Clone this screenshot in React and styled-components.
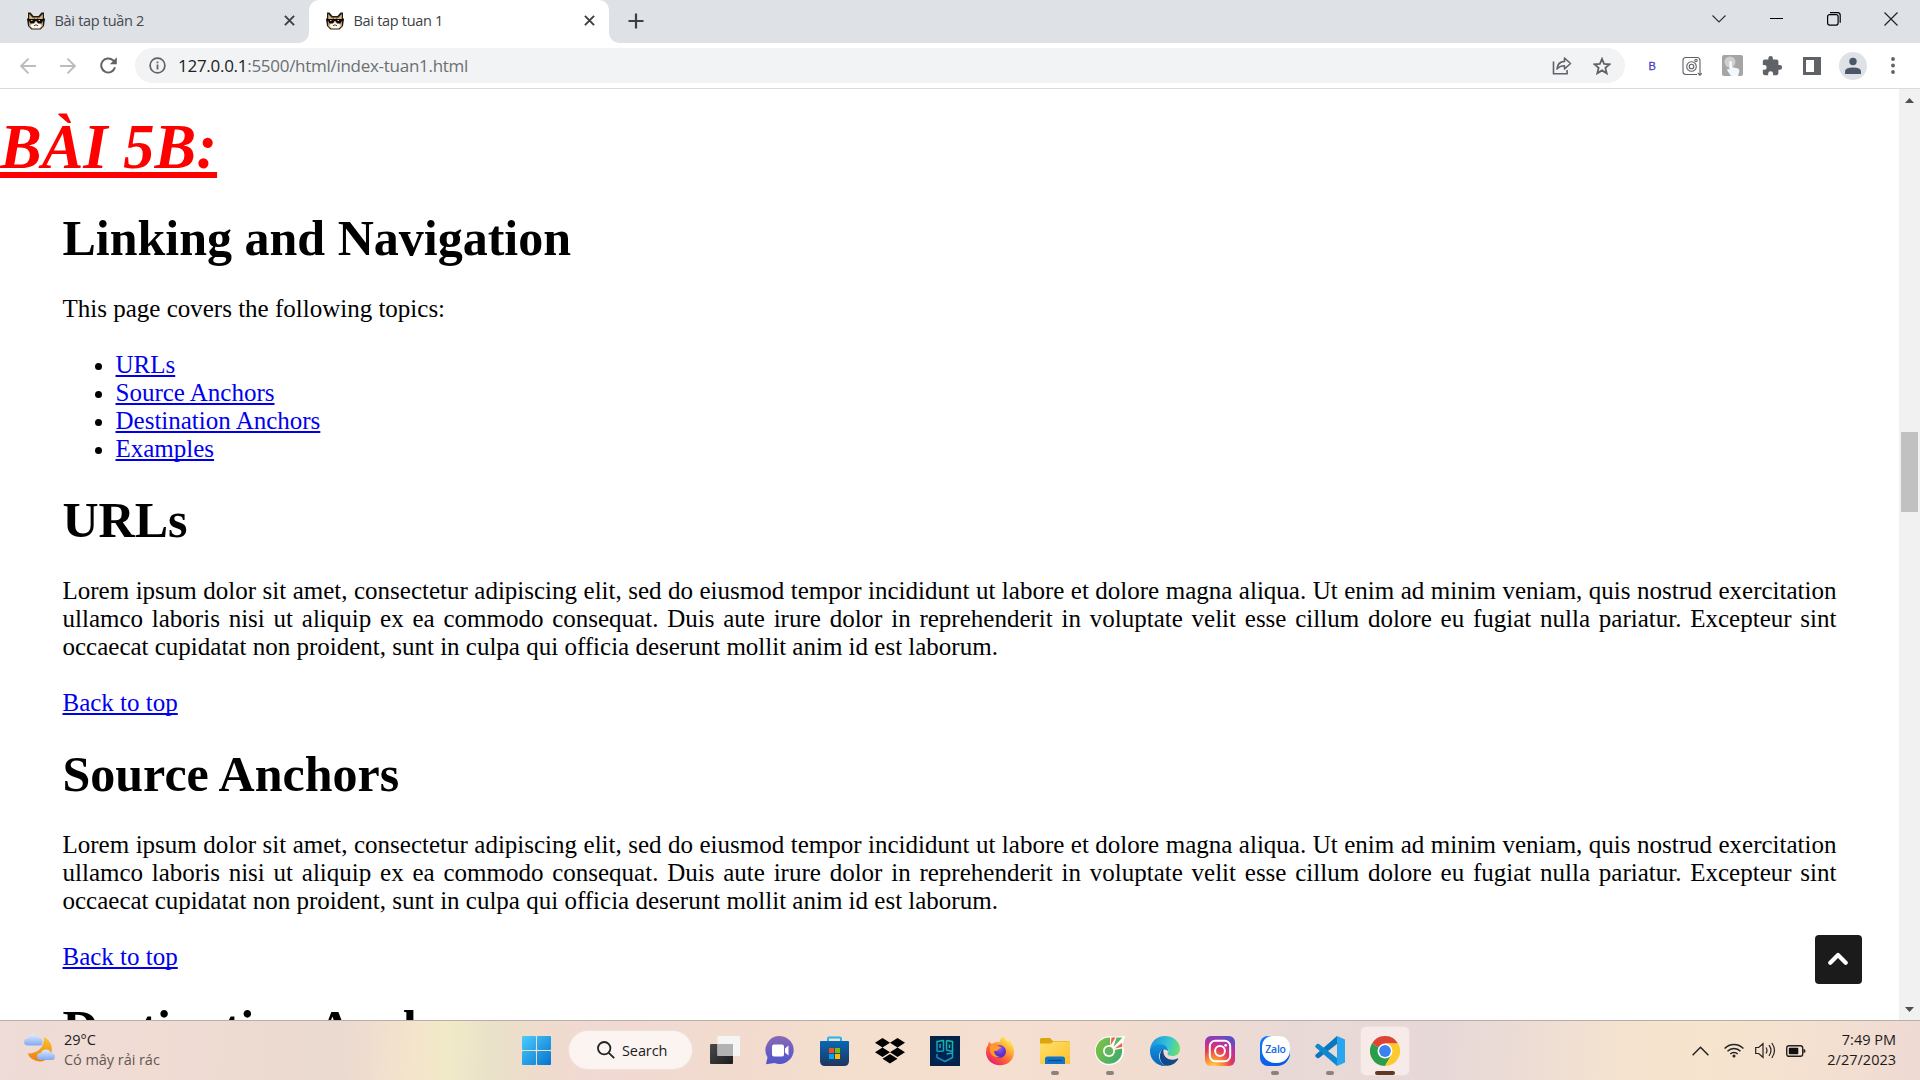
import React from "react";
import styled, { createGlobalStyle, css } from "styled-components";

const Global = createGlobalStyle`
  *{box-sizing:border-box}
  html,body{margin:0;padding:0;background:#fff;overflow:hidden}
`;
const ui = css`font-family:"Open Sans","Noto Sans",sans-serif;`;

const Screen = styled.div`
  width:1920px;height:1080px;display:flex;flex-direction:column;overflow:hidden;background:#fff;
`;
const TabStrip = styled.div`
  ${ui} height:43px;flex:none;display:flex;background:#dee1e6;
`;
const Tab = styled.div`
  width:${p => p.$w}px;height:43px;display:flex;align-items:center;padding:0 14px 2px ${p => p.$pl}px;
  color:${p => (p.$active ? "#3c4043" : "#45494d")};
  font-size:14.5px;
  ${p => p.$active && css`background:#fff;border-radius:10px 10px 0 0;position:relative;
    &::before,&::after{content:"";position:absolute;bottom:0;width:10px;height:10px;}
    &::before{left:-10px;background:radial-gradient(circle at 0 0,transparent 9.5px,#fff 10px);}
    &::after{right:-10px;background:radial-gradient(circle at 100% 0,transparent 9.5px,#fff 10px);}`}
`;
const TabTitle = styled.span`
  flex:1;margin-left:10px;white-space:nowrap;letter-spacing:${p => p.$ls}px;
`;
const NewTab = styled.div`
  width:30px;height:42px;margin-left:12px;display:flex;align-items:center;justify-content:center;
`;
const WindowButtons = styled.div`
  margin-left:auto;display:flex;height:38px;
`;
const WindowButton = styled.div`
  width:57.4px;display:flex;align-items:center;justify-content:center;
`;
const Toolbar = styled.div`
  ${ui} height:46px;flex:none;display:flex;align-items:center;background:#fff;border-bottom:1px solid #d9dbdd;
  padding-left:8px;
`;
const NavButton = styled.div`
  width:40px;height:40px;display:flex;align-items:center;justify-content:center;
`;
const Omnibox = styled.div`
  width:1490px;height:35px;border-radius:18px;background:#f1f3f4;display:flex;align-items:center;
  margin-left:7px;padding:0 3px 0 14px;
`;
const Url = styled.div`
  flex:1;margin-left:12px;font-size:17px;letter-spacing:-.28px;color:#6b6f73;white-space:nowrap;
  b{font-weight:400;color:#202124}
`;
const OmniIcon = styled.div`
  width:40px;display:flex;justify-content:center;
`;
const Extensions = styled.div`
  display:flex;align-items:center;margin-left:7px;
`;
const Ext = styled.div`
  width:40.1px;height:40px;display:flex;align-items:center;justify-content:center;
`;
const BMark = styled.span`
  font:400 11px "Liberation Sans",sans-serif;color:#4a3fc0;-webkit-text-stroke:.3px #4a3fc0;
`;
const Avatar = styled.div`
  width:28px;height:28px;border-radius:50%;background:#dee1e6;display:flex;align-items:center;justify-content:center;
`;
const Viewport = styled.div`
  height:931px;flex:none;display:flex;overflow:hidden;
`;
const Page = styled.main`
  position:relative;flex:1;min-width:0;height:931px;overflow:hidden;color:#000;
  font:25px/28px "Liberation Serif","Times New Roman",serif;
`;
const Exercise = styled.h1`
  margin:22px 0 0;font-size:62.5px;line-height:72px;font-style:italic;font-weight:700;color:#f00;
  text-decoration:underline;text-decoration-thickness:6px;text-underline-offset:4px;text-decoration-skip-ink:none;
`;
const Body = styled.div`
  padding:0 62.5px;
`;
const Heading = styled.h2`
  font-size:50px;line-height:56px;font-weight:700;margin:${p => p.$top}px 0 29px;
`;
const Para = styled.p`
  margin:0 0 28px;text-align:justify;
`;
const Topics = styled.ul`
  margin:0;padding-left:53px;
`;
const Link = styled.a`
  color:#0000ee;text-decoration:underline;text-decoration-thickness:2px;text-underline-offset:2px;text-decoration-skip-ink:none;
`;
const ToTop = styled.div`
  position:absolute;left:1815px;top:846px;width:47px;height:49px;border-radius:4px;background:#1b1b1b;
  display:flex;align-items:center;justify-content:center;padding:0 1px 2px 0;
`;
const ScrollBar = styled.div`
  width:21px;background:#f1f1f1;display:flex;flex-direction:column;align-items:center;
`;
const ScrollArrow = styled.div`
  height:21px;display:flex;align-items:center;justify-content:center;padding-top:${p => p.$shift || 0}px;
`;
const ScrollTrack = styled.div`
  flex:1;padding-top:322px;
`;
const ScrollThumb = styled.div`
  width:17px;height:80px;background:#c1c1c1;
`;
const Taskbar = styled.div`
  ${ui} height:60px;flex:none;border-top:1px solid #b9aea8;display:flex;align-items:stretch;color:#1b1b1b;
  background:linear-gradient(94deg,#efdbd7 0,#f1dcd4 8%,#ecdad1 14%,#ebdad0 18%,#f4e4cc 21.5%,#f1eac8 23.4%,#e9e2c9 25.5%,#efdccc 28%,#f1d9d4 31%,#f1dacf 36%,#f4decd 44%,#f4dfd0 52%,#f1dcd0 60%,#e9d9d6 67%,#e7d8d8 75%,#ecdcd5 79%,#f5e3cf 85%,#f7e4ce 89%,#f3dfd1 96%,#efd9d4 100%);
`;
const Weather = styled.div`
  width:514px;display:flex;padding:9px 0 0 24px;
`;
const WeatherText = styled.div`
  margin-left:8px;font-size:14.5px;letter-spacing:-.05px;
`;
const Line = styled.div`
  height:20px;line-height:20px;white-space:nowrap;color:${p => (p.$dim ? "#5f5854" : "#1b1b1b")};
`;
const Dock = styled.div`
  display:flex;
`;
const AppSlot = styled.div`
  width:${p => p.$w || 55}px;height:59px;display:flex;align-items:center;justify-content:center;position:relative;
`;
const AppTile = styled.div`
  width:48px;height:48px;border-radius:5px;display:flex;align-items:center;justify-content:center;
  ${p => p.$on && css`background:#f6ebe8;box-shadow:0 0 0 1px #eadfdb;`}
`;
const Indicator = styled.i`
  position:absolute;left:50%;bottom:5px;transform:translateX(-50%);height:4px;border-radius:2px;
  width:${p => (p.$on ? 20 : 8)}px;background:${p => (p.$on ? "#5f3825" : "#8b827e")};
`;
const Search = styled.div`
  width:123px;height:38px;margin:10px 5px 0 10px;border-radius:19px;background:#fbf4f1;box-shadow:0 0 0 1px #efe0da;
  display:flex;align-items:center;padding-left:28px;font-size:14.5px;gap:7px;letter-spacing:-.1px;
`;
const Tray = styled.div`
  margin-left:auto;display:flex;align-items:center;padding-right:24px;
`;
const TrayIcon = styled.div`
  width:${p => p.$w}px;display:flex;justify-content:center;
`;
const Clock = styled.div`
  width:84px;text-align:right;font-size:14.5px;padding-bottom:2px;
`;

const Cat = () => (
  <svg width="18" height="18" viewBox="0 0 18 18">
    <path d="M1 .5h2.500L6.500 4h5l3-3.500H17V6l1 1-1 7-3.500 3.500h-9L1 14 0 7l1-1z" fill="#241b14" />
    <path d="M2.200 2l3.300 3.500h7L15.800 2v12L13 16.500H5L2.200 14z" fill="#d9b27c" />
    <path d="M6 5.500h1.500L8 7.500zM12 5.500h-1.500L10 7.500z" fill="#5a3d25" />
    <path d="M5.500 10.500h7l2 3.500-2 2.200h-7L3.500 14z" fill="#fbf7ee" />
    <path d="M.5 7h17v1.500h-1.500l-1.500 3H11L9.500 9h-1L7 11.500H3.500L2 8.500H.5z" fill="#0a0a0a" />
    <path d="M4 8.500h1.500M11.500 8.500H13" stroke="#fff" strokeWidth=".8" />
    <path d="M7 14l1-1h2l1 1" stroke="#3a2c20" strokeWidth=".9" fill="none" />
  </svg>
);
const Close = () => (
  <svg width="11" height="11" viewBox="0 0 12 12" stroke="#3c4043" strokeWidth="2.100"><path d="M1 1l10 10M11 1L1 11" /></svg>
);
const Arrow = ({ flip }) => (
  <svg width="16" height="16" viewBox="0 0 16 16" fill="none" stroke="#babcbe" strokeWidth="1.900">
    <path d={flip ? "M0 8h14.500M7.500.7L14.800 8l-7.300 7.300" : "M16 8H1.500M8.500.7L1.200 8l7.300 7.300"} />
  </svg>
);
const Reload = () => (
  <svg width="17" height="17" viewBox="0 0 17 17"><path d="M15 10.300A7 7 0 1 1 13 3.300l1.500 1.500" fill="none" stroke="#5f6368" strokeWidth="2" /><path d="M16.800.300v7h-7z" fill="#5f6368" /></svg>
);
const Info = () => (
  <svg width="17" height="17" viewBox="0 0 17 17" fill="none" stroke="#5f6368"><circle cx="8.500" cy="8.500" r="7.400" strokeWidth="1.700" /><path d="M8.500 7.500v5M8.500 4.400v1.800" strokeWidth="1.800" /></svg>
);
const Share = () => (
  <svg width="20" height="19" viewBox="0 0 20 19" fill="none" stroke="#5f6368" strokeWidth="1.600"><path d="M1.500 5.500v12.200h13.600v-3.600" /><path d="M5 13c.4-5 3-7.300 7.500-7.600V2l6 5.500-6 5.500V9.700C9 9.700 6.800 10.600 5 13z" strokeLinejoin="round" /></svg>
);
const Star = () => (
  <svg width="18" height="18" viewBox="0 0 18 18" fill="none" stroke="#5f6368" strokeWidth="1.800"><path d="M9 1.900l2.100 4.900 5.500.5-4.200 3.600 1.300 5.400L9 13.400l-4.700 2.900 1.300-5.400L1.400 7.300l5.500-.5z" /></svg>
);
const Folder = () => (
  <svg width="30" height="28" viewBox="0 0 30 28">
    <defs><linearGradient id="fo" x1="0" y1="0" x2="1" y2="1"><stop stopColor="#ffdf6c" /><stop offset="1" stopColor="#fcc22b" /></linearGradient></defs>
    <path d="M0 2.500Q0 1 1.500 1H10l3 3h15.500Q30 4 30 5.500V12H0z" fill="#dfa30d" />
    <path d="M0 6.500h11l2.500-2H30V27H0z" fill="url(#fo)" />
    <path d="M5 27v-5q0-2.500 2.500-2.500h15Q25 19.500 25 22v5z" fill="#1174c8" /><path d="M8 23.500h14" stroke="#0a4a8b" strokeWidth="1.300" />
  </svg>
);
const Firefox = () => (
  <svg width="30" height="30" viewBox="0 0 30 30">
    <defs>
      <linearGradient id="ff" x1=".85" y1=".1" x2=".2" y2="1"><stop stopColor="#fff44f" /><stop offset=".35" stopColor="#ffa436" /><stop offset=".65" stopColor="#ff5a36" /><stop offset="1" stopColor="#e3157e" /></linearGradient>
      <radialGradient id="fp" cx=".5" cy=".3"><stop stopColor="#9059ff" /><stop offset="1" stopColor="#5a2fc2" /></radialGradient>
    </defs>
    <path d="M4 5.500l2.600 2.600 4-1.900Q14 5.500 14.500 6q1-4 4.500-6 .5 3.500 4.500 5.800l1-1.300Q29 10 29 16c0 8-6 13.200-14 13.200S1 23.500 1 16q0-4.500 2-7z" fill="url(#ff)" />
    <circle cx="14.500" cy="15.500" r="6.500" fill="url(#fp)" />
    <path d="M5 10q4-2.500 9.500.5L17 12q-3 0-4 2-1.500 1.500-4 1 .5 5 6 6-8 1.500-10-6z" fill="#ff9a2c" />
  </svg>
);
const CocCoc = () => (
  <svg width="30" height="30" viewBox="0 0 30 30">
    <defs><linearGradient id="cc" x1="0" y1="0" x2="1" y2=".6"><stop stopColor="#85c440" /><stop offset="1" stopColor="#43ad68" /></linearGradient></defs>
    <path d="M15 .3q3 0 4 .5L30 0l-3 9.500 1.500 2A14.500 14.500 0 1 1 15 .3z" fill="#fff" />
    <path d="M15 1.500A13.200 13.200 0 1 0 27 12.500l-8 1.500L15 10z" fill="url(#cc)" />
    <circle cx="14" cy="15" r="6" fill="#fff" /><circle cx="14" cy="15" r="4.300" fill="#62b75a" />
    <path d="M15.500 9.500l1-8h4z" fill="#f0643c" /><path d="M19.500 12.500L27 7v4z" fill="#f0643c" /><path d="M27.500 1.500l-9 9.500 3-9.500z" fill="#5db45f" />
  </svg>
);
const Edge = () => (
  <svg width="30" height="30" viewBox="0 0 30 30">
    <defs>
      <linearGradient id="e1" x1="0" y1=".3" x2="1" y2=".5"><stop stopColor="#1a91d8" /><stop offset=".6" stopColor="#36c5d5" /><stop offset="1" stopColor="#6be06a" /></linearGradient>
      <linearGradient id="e2" x1="0" y1="0" x2="0" y2="1"><stop stopColor="#1193df" /><stop offset="1" stopColor="#0763bc" /></linearGradient>
    </defs>
    <path d="M0 14C.7 5.500 7 0 15 0c9 0 15 6.500 15 12.500 0 5-3.500 7.500-7.500 7.500-5 0-5.500-2.200-4.500-3.400 1-1.300.9-6.600-6.500-6.600C6 10 2 13 0 14z" fill="url(#e1)" />
    <path d="M0 14C2 9 7 7.800 11 8.200c5 .5 7.500 4 7 7.300C17 12 9.500 12.500 9 20c0 5 4 9.500 8 9.900C8 31-.5 24 0 14z" fill="url(#e2)" />
    <path d="M13.500 13C8 16 8.500 29 17.500 29.800 23 29.500 26.500 26 28.200 23c.3-.7-.3-.9-.8-.6C20 26 12 21.500 13.500 13z" fill="#114a8b" />
  </svg>
);
const Instagram = () => (
  <svg width="30" height="30" viewBox="0 0 30 30" fill="none">
    <defs>
      <radialGradient id="ig" cx=".28" cy="1.050" r="1.100"><stop stopColor="#ffdc5c" /><stop offset=".3" stopColor="#fb8a35" /><stop offset=".55" stopColor="#e23a5b" /><stop offset=".8" stopColor="#b82fa5" /><stop offset="1" stopColor="#5b4fc9" /></radialGradient>
    </defs>
    <rect width="30" height="30" rx="6" fill="url(#ig)" />
    <rect x="4.800" y="4.800" width="20.400" height="20.400" rx="5.500" stroke="#fff" strokeWidth="2" /><circle cx="15" cy="15" r="4.900" stroke="#fff" strokeWidth="2" /><circle cx="20.700" cy="9.300" r="1.400" fill="#fff" />
  </svg>
);
const ZaloBadge = styled.div`
  width:30px;height:30px;border-radius:8px 13px 13px 8px;background:linear-gradient(150deg,#0a7bff,#0a55e0);padding:0 0 4px 2px;
`;
const ZaloInner = styled.div`
  width:28px;height:27px;border-radius:10px 11px 13px 13px;background:#fff;color:#1268e6;display:flex;align-items:center;justify-content:center;
  font:600 10.500px/1 "Open Sans",sans-serif;letter-spacing:-.2px;
`;
const VSCode = () => (
  <svg width="30" height="30" viewBox="0 0 30 30">
    <path d="M22 0v8L4 22q-1 .7-2 0L.5 20.500q-.7-1 .3-2z" fill="#0a76bd" />
    <path d="M22 30v-8L4 8q-1-.7-2 0L.5 9.500q-.7 1 .3 2z" fill="#1187d0" />
    <path d="M22 0l8 3.500v23L22 30z" fill="#2aa6ee" />
  </svg>
);
const Chrome = () => (
  <svg width="30" height="30" viewBox="0 0 30 30">
    <path d="M15 15L2 7.500A15 15 0 0 1 28 7.500H15z" fill="#df4333" />
    <path d="M15 15l6.500 3.700L15 30A15 15 0 0 1 2 7.500z" fill="#2c9d4a" />
    <path d="M15 7.500h13A15 15 0 0 1 15 30l6.500-11.300z" fill="#fcca2b" />
    <circle cx="15" cy="15" r="7.500" fill="#fff" /><circle cx="15" cy="15" r="5.900" fill="#3d81ee" />
  </svg>
);
const Windows = () => (
  <svg width="29" height="29" viewBox="0 0 29 29">
    <defs><linearGradient id="wi" gradientUnits="userSpaceOnUse" x1="0" y1="0" x2="29" y2="29"><stop stopColor="#4ccdfb" /><stop offset="1" stopColor="#0473cf" /></linearGradient></defs>
    <g fill="url(#wi)"><rect width="14" height="14" rx="1" /><rect x="15" width="14" height="14" rx="1" /><rect y="15" width="14" height="14" rx="1" /><rect x="15" y="15" width="14" height="14" rx="1" /></g>
  </svg>
);
const TaskView = () => (
  <svg width="30" height="29" viewBox="0 0 30 29">
    <defs><linearGradient id="tv" x1="0" y1="0" x2="1" y2="1"><stop stopColor="#4a4a4a" /><stop offset="1" stopColor="#1d1d1d" /></linearGradient></defs>
    <rect y="8" width="23" height="20" rx="1" fill="url(#tv)" /><rect x="7.500" y="0" width="22.500" height="20" rx="1" fill="#f7f5f4" /><path d="M7.500 8H23v12H7.500z" fill="#b2b2b2" />
  </svg>
);
const Chat = () => (
  <svg width="30" height="29" viewBox="0 0 30 29">
    <defs><linearGradient id="ch" x1="0" y1="0" x2="0" y2="1"><stop stopColor="#8a69b4" /><stop offset="1" stopColor="#4f55cc" /></linearGradient></defs>
    <path d="M15 0a14 14 0 1 1-5.500 27L1 28.200l1.500-7A14 14 0 0 1 15 0z" fill="url(#ch)" /><rect x="7" y="8.500" width="12" height="12" rx="2" fill="#fff" /><path d="M20 12.500l3.500-3v10l-3.500-3z" fill="#fff" />
  </svg>
);
const Store = () => (
  <svg width="29" height="30" viewBox="0 0 29 30">
    <defs><linearGradient id="st" x1="0" y1="0" x2="0" y2="1"><stop stopColor="#0668b3" /><stop offset="1" stopColor="#20355f" /></linearGradient></defs>
    <path d="M8 6V2.500Q8 1.500 9 1.500h11q1 0 1 1V6" fill="none" stroke="#23b6ee" strokeWidth="2" /><path d="M0 6q0-1 1-1h27q1 0 1 1v19q0 5-5 5H5q-5 0-5-5z" fill="url(#st)" />
    <path d="M9 12h5v5H9z" fill="#f25022" /><path d="M15 12h5v5h-5z" fill="#7fba00" /><path d="M9 18h5v5H9z" fill="#00a4ef" /><path d="M15 18h5v5h-5z" fill="#ffb900" />
  </svg>
);
const Dropbox = () => (
  <svg width="30" height="27" viewBox="0 0 30 27"><path d="M7.500 1l7.500 4.700-7.500 4.700L0 5.700zM22.500 1L30 5.700l-7.500 4.700L15 5.700zM7.500 10.600l7.500 4.700L7.500 20 0 15.300zM22.500 10.600l7.500 4.700-7.500 4.700-7.500-4.700zM15 17l7.500 4.700L15 26.400l-7.500-4.700z" /></svg>
);
const Shield = () => (
  <svg width="30" height="30" viewBox="0 0 30 30" fill="none">
    <defs><linearGradient id="sh" gradientUnits="userSpaceOnUse" x1="5" y1="26" x2="20" y2="4"><stop stopColor="#1878d8" /><stop offset="1" stopColor="#12c3a6" /></linearGradient></defs>
    <rect width="30" height="30" fill="#02244a" />
    <path d="M7 15.500V5.500L13.500 4.500V15L7 15.500M16.500 4.500l6 1v16L15 25.500 7 21.500V18M16.500 4.500V14l6 1.500M10 8v4M19.500 8.500V12M16.500 18l6-1" stroke="url(#sh)" strokeWidth="1.500" strokeLinejoin="round" />
  </svg>
);

const LOREM = "Lorem ipsum dolor sit amet, consectetur adipiscing elit, sed do eiusmod tempor incididunt ut labore et dolore magna aliqua. Ut enim ad minim veniam, quis nostrud exercitation ullamco laboris nisi ut aliquip ex ea commodo consequat. Duis aute irure dolor in reprehenderit in voluptate velit esse cillum dolore eu fugiat nulla pariatur. Excepteur sint occaecat cupidatat non proident, sunt in culpa qui officia deserunt mollit anim id est laborum.";

const Zalo = () => <ZaloBadge><ZaloInner>Zalo</ZaloInner></ZaloBadge>;
const APPS = [
  { Icon: TaskView }, { Icon: Chat }, { Icon: Store }, { Icon: Dropbox }, { Icon: Shield }, { Icon: Firefox },
  { Icon: Folder, open: true }, { Icon: CocCoc, open: true }, { Icon: Edge }, { Icon: Instagram },
  { Icon: Zalo, open: true }, { Icon: VSCode, open: true }, { Icon: Chrome, open: true, active: true },
];

const Section = ({ title, top }) => (
  <>
    <Heading $top={top}>{title}</Heading>
    <Para>{LOREM}</Para>
    <Para><Link>Back to top</Link></Para>
  </>
);

export default function App() {
  return (
    <Screen>
      <Global />
      <TabStrip>
        <Tab $w={309} $pl={26.5}><Cat /><TabTitle $ls={-0.3}>Bài tap tuần 2</TabTitle><Close /></Tab>
        <Tab $w={300} $pl={16.5} $active><Cat /><TabTitle $ls={-0.3}>Bai tap tuan 1</TabTitle><Close /></Tab>
        <NewTab><svg width="16" height="16" viewBox="0 0 16 16" stroke="#3c4043" strokeWidth="2.200"><path d="M8 .5v15M.5 8h15" /></svg></NewTab>
        <WindowButtons>
          <WindowButton><svg width="14" height="8" viewBox="0 0 14 8" fill="none" stroke="#333" strokeWidth="1.200"><path d="M.5.500L7 7 13.500.500" /></svg></WindowButton>
          <WindowButton><svg width="13" height="2"><rect width="13" height="1" fill="#000" /></svg></WindowButton>
          <WindowButton><svg width="14" height="14" viewBox="0 0 14 14" fill="none" stroke="#000" strokeWidth="1.200"><rect x=".6" y="2.600" width="10.500" height="10.500" rx="2" /><path d="M3 .6h7.500q2.700 0 2.700 2.700v7.500" /></svg></WindowButton>
          <WindowButton><svg width="14" height="14" viewBox="0 0 14 14" stroke="#222" strokeWidth="1.200"><path d="M.5.500l13 13M13.500.500l-13 13" /></svg></WindowButton>
        </WindowButtons>
      </TabStrip>
      <Toolbar>
        <NavButton><Arrow /></NavButton>
        <NavButton><Arrow flip /></NavButton>
        <NavButton><Reload /></NavButton>
        <Omnibox>
          <Info />
          <Url><b>127.0.0.1</b>:5500/html/index-tuan1.html</Url>
          <OmniIcon><Share /></OmniIcon>
          <OmniIcon><Star /></OmniIcon>
        </Omnibox>
        <Extensions>
          <Ext><BMark>B</BMark></Ext>
          <Ext><svg width="20" height="20" viewBox="0 0 20 20" fill="none" stroke="#5f6368" strokeWidth="1.100"><path d="M15 18.500H4Q1 18.500 1 15.500v-11q0-3 3-3h11q3 0 3 3V15M18 14v5M15.800 17l2.200 2.300L20 17" /><circle cx="9.500" cy="10.500" r="4.800" /><circle cx="9.500" cy="10.500" r="2.300" /><circle cx="14" cy="4.500" r="1.200" /></svg></Ext>
          <Ext><svg width="21" height="21" viewBox="0 0 21 21"><rect width="21" height="21" rx="2" fill="#a5a5a5" /><circle cx="8" cy="7" r="5.500" fill="#cfcfcf" /><path d="M7 7q1.500-2 3 0v5l6 1.500q2 1 1 4L16 21H9l-4-6q1-2 2.500 0z" fill="#f3f8fc" /></svg></Ext>
          <Ext><svg width="22" height="22" viewBox="0 0 24 24" fill="#5f6368"><path d="M20.500 11H19V7a2 2 0 0 0-2-2h-4V3.500a2.500 2.500 0 0 0-5 0V5H4a2 2 0 0 0-2 2v3.800h1.500a2.700 2.700 0 0 1 0 5.400H2V20a2 2 0 0 0 2 2h3.800v-1.500a2.700 2.700 0 0 1 5.400 0V22H17a2 2 0 0 0 2-2v-4h1.500a2.500 2.500 0 0 0 0-5z" /></svg></Ext>
          <Ext><svg width="18" height="18" viewBox="0 0 18 18"><path d="M0 0h18v18H0zM3 3v12h8V3z" fill="#5f6368" fillRule="evenodd" /></svg></Ext>
          <Ext><Avatar><svg width="18" height="18" viewBox="0 0 18 18" fill="#4b5669"><circle cx="9" cy="4.500" r="3.700" /><path d="M1 17v-2.500Q1 10.500 9 10.500t8 4V17z" /></svg></Avatar></Ext>
          <Ext><svg width="4" height="17" viewBox="0 0 4 17" fill="#5f6368"><circle cx="2" cy="2" r="1.900" /><circle cx="2" cy="8.500" r="1.900" /><circle cx="2" cy="15" r="1.900" /></svg></Ext>
        </Extensions>
      </Toolbar>
      <Viewport>
        <Page>
          <Exercise>BÀI 5B:</Exercise>
          <Body>
            <Heading $top={27}>Linking and Navigation</Heading>
            <Para>This page covers the following topics:</Para>
            <Topics>
              {["URLs", "Source Anchors", "Destination Anchors", "Examples"].map(t => <li key={t}><Link>{t}</Link></li>)}
            </Topics>
            <Section title="URLs" top={29} />
            <Section title="Source Anchors" top={29} />
            <Heading $top={29}>Destination Anchors</Heading>
          </Body>
          <ToTop><svg width="20" height="13" viewBox="0 0 20 13" fill="none" stroke="#fff" strokeWidth="4.200" strokeLinecap="round" strokeLinejoin="round"><path d="M2.300 10.700L10 3l7.700 7.700" /></svg></ToTop>
        </Page>
        <ScrollBar>
          <ScrollArrow $shift={2}><svg width="9" height="5"><path d="M0 5L4.500 0 9 5z" fill="#505050" /></svg></ScrollArrow>
          <ScrollTrack><ScrollThumb /></ScrollTrack>
          <ScrollArrow><svg width="9" height="5"><path d="M0 0L4.500 5 9 0z" fill="#505050" /></svg></ScrollArrow>
        </ScrollBar>
      </Viewport>
      <Taskbar>
        <Weather>
          <svg width="32" height="34" viewBox="0 0 32 34">
            <defs>
              <linearGradient id="mo" x1="0" y1="0" x2="0" y2="1"><stop stopColor="#fbc52f" /><stop offset="1" stopColor="#ee7d12" /></linearGradient>
              <linearGradient id="cl" x1="0" y1="0" x2="0" y2="1"><stop stopColor="#dcecff" /><stop offset="1" stopColor="#82a8ee" /></linearGradient>
            </defs>
            <path d="M20 7c12 6 10 24-4 24.500Q7 31 3.500 23.500 20 23 20 7z" fill="url(#mo)" />
            <path d="M4 15.500q-4 0-4-3.500t4-3.500q1-4 5.500-4T15 8q3.500 0 3.500 4T15 15.500z" fill="url(#cl)" />
            <path d="M17 30q-4 0-4-3.500t4-3.500q1-3.500 5-3.500t5 3.500q4 0 4 3.500T27.500 30z" fill="url(#cl)" />
          </svg>
          <WeatherText><Line>29°C</Line><Line $dim>Có mây rải rác</Line></WeatherText>
        </Weather>
        <Dock>
          <AppSlot $w={45}><Windows /></AppSlot>
          <Search><svg width="18" height="18" viewBox="0 0 18 18" fill="none" stroke="#222" strokeWidth="1.800"><circle cx="7.200" cy="7.200" r="6.200" /><path d="M11.800 11.800l5.400 5.400" /></svg>Search</Search>
          {APPS.map(({ Icon, open, active }, i) => (
            <AppSlot key={i}>
              <AppTile $on={active}><Icon /></AppTile>
              {open && <Indicator $on={active} />}
            </AppSlot>
          ))}
        </Dock>
        <Tray>
          <TrayIcon $w={36}><svg width="17" height="10" viewBox="0 0 17 10" fill="none" stroke="#222" strokeWidth="1.500"><path d="M.6 9.200L8.500 1.200l7.900 8" /></svg></TrayIcon>
          <TrayIcon $w={32}><svg width="20" height="15" viewBox="0 0 20 15" fill="none" stroke="#222" strokeWidth="1.400"><path d="M.6 5.500a13 13 0 0 1 18.800 0M3.500 8.300a9 9 0 0 1 13 0M6.300 11a5.200 5.200 0 0 1 7.400 0" /><circle cx="10" cy="13" r="1.500" fill="#222" stroke="none" /></svg></TrayIcon>
          <TrayIcon $w={30}><svg width="21" height="17" viewBox="0 0 21 17" fill="none" stroke="#222" strokeWidth="1.200"><path d="M.7 5.500h3L8 1.700v13.600l-4.300-3.800h-3zM11 5.500q2 3 0 6M14 3.200q4 5.300 0 10.600M16.800 1q5.400 7.500 0 15" /></svg></TrayIcon>
          <TrayIcon $w={32}><svg width="20" height="12" viewBox="0 0 20 12" fill="none"><rect x=".7" y=".7" width="16" height="10.600" rx="2.200" stroke="#222" strokeWidth="1.400" /><rect x="2.800" y="2.800" width="9.500" height="6.400" rx="1" fill="#111" /><path d="M17.500 4q2 0 2 2t-2 2z" fill="#222" /></svg></TrayIcon>
          <Clock><Line>7:49 PM</Line><Line>2/27/2023</Line></Clock>
        </Tray>
      </Taskbar>
    </Screen>
  );
}
